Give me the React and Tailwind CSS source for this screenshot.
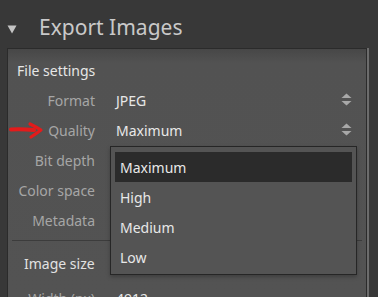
import React from "react";

const font = { fontFamily: '"Noto Sans", "Open Sans", sans-serif' };

function Arrows() {
  return (
    <svg width="11" height="14" viewBox="0 0 11 14" className="shrink-0">
      <polygon points="5.5,0.5 10.5,5 0.5,5" fill="#a8a8a8" />
      <polygon points="0.5,8 10.5,8 5.5,12.5" fill="#a8a8a8" />
    </svg>
  );
}

function Row({ label, value, arrows, children }) {
  return (
    <div className="relative flex h-[30px] items-center">
      <div className="w-[87px] shrink-0 text-right text-[14px] text-[#a6a6a6]">{label}</div>
      <div className="ml-[21px] flex-1 text-[14px] text-[#e8e8e8]">{value}</div>
      {arrows && (
        <div className="mr-[14px] flex items-center">
          <Arrows />
        </div>
      )}
      {children}
    </div>
  );
}

export default function App() {
  return (
    <div
      className="relative h-[297px] w-[378px] overflow-hidden bg-[#383838]"
      style={font}
    >
      <div className="flex h-[48px] items-start">
        <svg width="10" height="9" viewBox="0 0 10 9" className="ml-[7px] mt-[25px]">
          <polygon points="0.5,0.5 9.5,0.5 5,8.5" fill="#c4c4c4" />
        </svg>
        <div className="ml-[22px] mt-[17px] text-[21px] leading-none text-[#c9c9c9]">Export Images</div>
      </div>
      <div className="flex">
        <div className="ml-[7px] h-[249px] w-[360px] border-l border-r border-t border-[#2b2b2b] bg-[linear-gradient(to_bottom,#474747_0px,#525252_14px,#535353_100%)]">
          <div className="pt-[6px]">
            <div className="flex h-[30px] items-center pl-[9px] text-[14px] text-[#e6e6e6]">File settings</div>
            <Row label="Format" value="JPEG" arrows />
            <Row label="Quality" value="Maximum" arrows />
            <Row label="Bit depth" value="" />
            <Row label="Color space" value="" />
            <Row label="Metadata" value="" />
            <div className="ml-[4px] mr-[4px] mt-[5px] h-px bg-[#3c3c3c]" />
            <div className="flex h-[42px] items-center pl-[16px] pt-[2px] text-[14px] text-[#e2e2e2]">Image size</div>
            <Row label="Width (px)" value="4912" />
          </div>
        </div>
        <div className="h-[249px] w-[2px] bg-[#6c6c6c]" />
      </div>

      {/* Red annotation arrow */}
      <svg className="absolute left-0 top-[120px]" width="46" height="22" viewBox="0 0 46 22">
        <path d="M11 9.5 Q22 9 34 10" stroke="#e41b1b" strokeWidth="4" strokeLinecap="round" fill="none" />
        <path d="M30 4 Q36 7 41 10 Q37 13 31 17" stroke="#e41b1b" strokeWidth="3.2" strokeLinecap="round" strokeLinejoin="round" fill="none" />
      </svg>

      {/* Dropdown popup */}
      <div className="absolute left-[110px] top-[146px] w-[247px] border border-[#262626] bg-[#545454] pb-[2px] pl-[4px] pr-[4px] pt-[5px] shadow-[0_2px_4px_rgba(0,0,0,0.25)]">
        {["Maximum", "High", "Medium", "Low"].map((t, i) => (
          <div
            key={t}
            className={
              i === 0
                ? "flex h-[30px] items-center bg-[#2b2b2b] pl-[5px] text-[14px] text-[#e8e8e8]"
                : "flex h-[30px] items-center pl-[5px] text-[14px] text-[#e8e8e8]"
            }
          >
            {t}
          </div>
        ))}
      </div>
    </div>
  );
}
